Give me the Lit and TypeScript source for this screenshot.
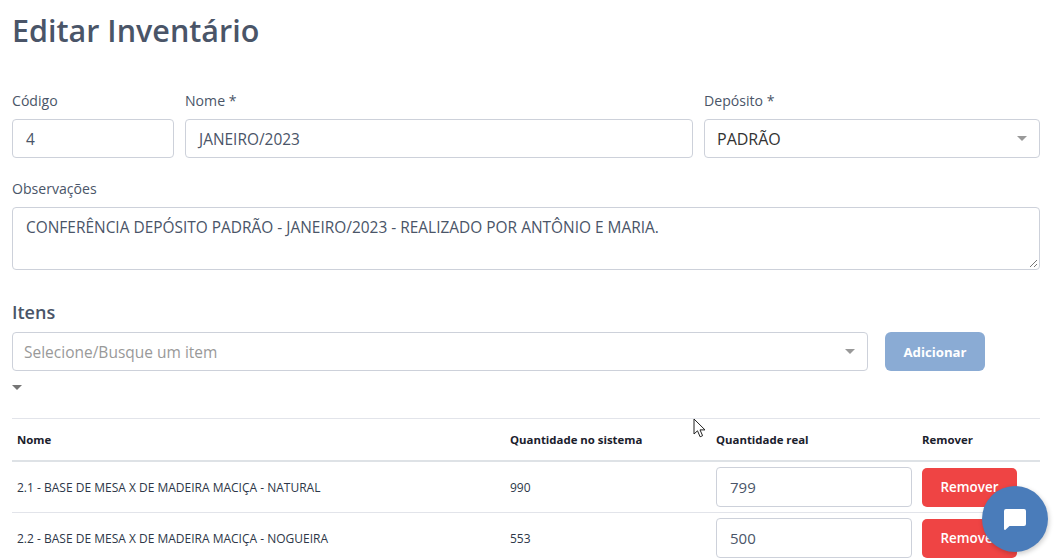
import { LitElement, css, html } from 'lit';
import { customElement } from 'lit/decorators.js';

const rows = [
  { name: '2.1 - BASE DE MESA X DE MADEIRA MACIÇA - NATURAL', system: '990', real: '799' },
  { name: '2.2 - BASE DE MESA X DE MADEIRA MACIÇA - NOGUEIRA', system: '553', real: '500' },
];

@customElement('app-root')
export class AppRoot extends LitElement {
  static override styles = css`
    :host {
      display: block;
      height: 560px;
      overflow: hidden;
      position: relative;
      background: #fff;
      font-family: 'Open Sans', 'Noto Sans', sans-serif;
      color: #4a5568;
    }
    .page {
      padding: 0 21px 0 12px;
    }
    h1 {
      margin: 0;
      padding-top: 9px;
      height: 82px;
      font-size: 30.5px;
      line-height: 42px;
      font-weight: 600;
      color: #4a5568;
    }
    .fields {
      display: grid;
      grid-template-columns: 162px 508px 336px;
      gap: 11px;
      margin-bottom: 21px;
    }
    label {
      display: block;
      font-size: 14.1px;
      line-height: 20px;
      height: 20px;
      margin-bottom: 8px;
    }
    .input {
      box-sizing: border-box;
      height: 39px;
      border: 1px solid #cdd1da;
      border-radius: 4px;
      padding: 0 13px;
      font-size: 15.45px;
      line-height: 38px;
      background: #fff;
    }
    .select {
      display: flex;
      align-items: center;
      justify-content: space-between;
      padding: 0 12px 0 12px;
      font-size: 16px;
      color: #333;
    }
    .caret {
      width: 0;
      height: 0;
      border-left: 5px solid transparent;
      border-right: 5px solid transparent;
      border-top: 5px solid #999;
    }
    .textarea {
      position: relative;
      height: 63px;
      padding: 8px 13px;
      line-height: 22px;
      margin-bottom: 30px;
    }
    .grip {
      position: absolute;
      right: 1px;
      bottom: 1px;
    }
    h2 {
      margin: 0 0 8px;
      font-size: 18px;
      line-height: 24px;
      font-weight: 600;
      color: #4a5568;
    }
    .search {
      display: flex;
      gap: 17px;
    }
    .search .select {
      width: 856px;
      padding-left: 11px;
      color: #999;
      font-size: 15.5px;
    }
    .add {
      width: 100px;
      height: 39px;
      border-radius: 6px;
      background: #8aabd4;
      color: #fff;
      font-size: 13.2px;
      font-weight: 700;
      display: flex;
      align-items: center;
      justify-content: center;
    }
    .stray {
      display: block;
      margin: 14px 0 28px;
      border-top-color: #757575;
    }
    table {
      width: 1028px;
      table-layout: fixed;
      border-collapse: collapse;
      border-top: 1px solid #e2e4ea;
    }
    th {
      height: 41px;
      padding: 0 5px;
      text-align: left;
      font-size: 11.4px;
      font-weight: 700;
      color: #1a202c;
      border-bottom: 2px solid #dee2e6;
    }
    td {
      padding: 5px;
      font-size: 12px;
      color: #2d3748;
      border-bottom: 1px solid #e2e4ea;
    }
    td .input {
      height: 40px;
      line-height: 39px;
      font-size: 15px;
      color: #4a5568;
    }
    .remove {
      width: 95px;
      height: 39px;
      border-radius: 5px;
      background: #ef4444;
      color: #fff;
      font-size: 13.4px;
      font-weight: 600;
      display: flex;
      align-items: center;
      justify-content: center;
    }
    .chat {
      position: absolute;
      left: 982px;
      top: 486px;
      width: 66px;
      height: 66px;
      border-radius: 50%;
      background: #4a7cba;
      box-shadow: 1px 2px 5px rgba(0, 0, 0, 0.2);
      display: flex;
      align-items: center;
      justify-content: center;
    }
    .cursor {
      position: absolute;
      left: 693px;
      top: 418px;
    }
  `;

  override render() {
    return html`
      <div class="page">
        <h1>Editar Inventário</h1>
        <div class="fields">
          <div><label>Código</label><div class="input">4</div></div>
          <div><label>Nome *</label><div class="input">JANEIRO/2023</div></div>
          <div>
            <label>Depósito *</label>
            <div class="input select">PADRÃO<span class="caret"></span></div>
          </div>
        </div>
        <label>Observações</label>
        <div class="input textarea">
          CONFERÊNCIA DEPÓSITO PADRÃO - JANEIRO/2023 - REALIZADO POR ANTÔNIO E MARIA.
          <svg class="grip" width="10" height="10" viewBox="0 0 10 10">
            <path d="M9 2 2 9M9 6 6 9" stroke="#777" stroke-width="1" fill="none" />
          </svg>
        </div>
        <h2>Itens</h2>
        <div class="search">
          <div class="input select">Selecione/Busque um item<span class="caret"></span></div>
          <div class="add">Adicionar</div>
        </div>
        <span class="caret stray"></span>
        <table>
          <colgroup>
            <col style="width:493px" /><col style="width:206px" /><col style="width:206px" /><col />
          </colgroup>
          <thead>
            <tr><th>Nome</th><th>Quantidade no sistema</th><th>Quantidade real</th><th>Remover</th></tr>
          </thead>
          <tbody>
            ${rows.map(
              (r) => html`
                <tr>
                  <td>${r.name}</td>
                  <td>${r.system}</td>
                  <td><div class="input">${r.real}</div></td>
                  <td><div class="remove">Remover</div></td>
                </tr>
              `
            )}
          </tbody>
        </table>
      </div>
      <svg class="cursor" width="14" height="20" viewBox="0 0 14 20">
        <path d="M1 1v15l3.5-3.2 2.6 6 2.500-1.100-2.600-5.800H12Z" fill="#fff" stroke="#222" stroke-width="1" />
      </svg>
      <div class="chat">
        <svg width="22" height="21" viewBox="0 0 22 21">
          <path d="M2 0h18a2 2 0 0 1 2 2v13a2 2 0 0 1-2 2H5.500L1.500 20.700A.9.900 0 0 1 0 20V2a2 2 0 0 1 2-2Z" fill="#fff" />
        </svg>
      </div>
    `;
  }
}
